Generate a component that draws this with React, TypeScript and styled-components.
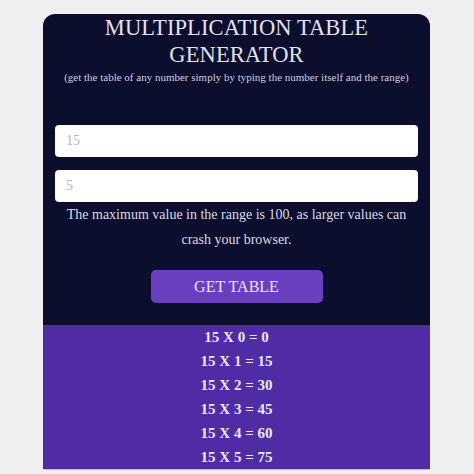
import React, { useState } from 'react';
import styled, { createGlobalStyle } from 'styled-components';

const GlobalStyle = createGlobalStyle`
  html, body {
    margin: 0;
    padding: 0;
    background: #efefef;
    font-family: "Liberation Serif", "DejaVu Serif", serif;
  }
`;

const Page = styled.div`
  display: flex;
  justify-content: center;
  padding-top: 14px;
  padding-left: 43px;
  padding-right: 44px;
`;

const Card = styled.div`
  width: 100%;
  background: #0b0e2c;
  border-radius: 12px 12px 0 0;
  overflow: hidden;
  border-bottom: 1px solid #c9b8f0;
`;

const Header = styled.div`
  display: flex;
  flex-direction: column;
  align-items: center;
  text-align: center;
  color: #e4e2ee;
`;

const Title = styled.h1`
  margin: 0;
  font-weight: normal;
  font-size: 22.5px;
  line-height: 27px;
  letter-spacing: 0.1px;
`;

const Subtitle = styled.p`
  margin: 3px 0 0;
  font-size: 11px;
  color: #cfcde0;
`;

const Form = styled.div`
  display: flex;
  flex-direction: column;
  padding: 42px 12px 0;
`;

const Field = styled.input`
  box-sizing: border-box;
  width: 100%;
  height: 32px;
  margin-bottom: 13px;
  padding: 0 11px;
  border: none;
  border-radius: 4px;
  background: #fff;
  font-family: inherit;
  font-size: 14px;
  color: #333;
  outline: none;

  &::placeholder {
    color: #b5b5b5;
  }
`;

const Note = styled.p`
  margin: -13px 0 0;
  text-align: center;
  font-size: 14px;
  line-height: 25px;
  color: #dcdae8;
`;

const ButtonRow = styled.div`
  display: flex;
  justify-content: center;
  padding: 18px 0 22px;
`;

const Button = styled.button`
  width: 172px;
  height: 33px;
  border: none;
  border-radius: 5px;
  background: #6a3fbf;
  color: #ebe6f8;
  font-family: inherit;
  font-size: 16px;
  cursor: pointer;
`;

const Results = styled.div`
  display: flex;
  flex-direction: column;
  align-items: center;
  background: #4f2ba6;
`;

const Row = styled.div`
  font-weight: bold;
  font-size: 15px;
  line-height: 24px;
  color: #ece8f6;
`;

export default function App() {
  const [num] = useState(15);
  const [range] = useState(5);
  const rows = Array.from({ length: range + 1 }, (_, i) => i);

  return (
    <>
      <GlobalStyle />
      <Page>
        <Card>
          <Header>
            <Title>
              MULTIPLICATION TABLE
              <br />
              GENERATOR
            </Title>
            <Subtitle>
              (get the table of any number simply by typing the number itself and the range)
            </Subtitle>
          </Header>
          <Form>
            <Field placeholder="15" />
            <Field placeholder="5" />
            <Note>
              The maximum value in the range is 100, as larger values can
              <br />
              crash your browser.
            </Note>
          </Form>
          <ButtonRow>
            <Button>GET TABLE</Button>
          </ButtonRow>
          <Results>
            {rows.map((i) => (
              <Row key={i}>
                {num} X {i} = {num * i}
              </Row>
            ))}
          </Results>
        </Card>
      </Page>
    </>
  );
}
